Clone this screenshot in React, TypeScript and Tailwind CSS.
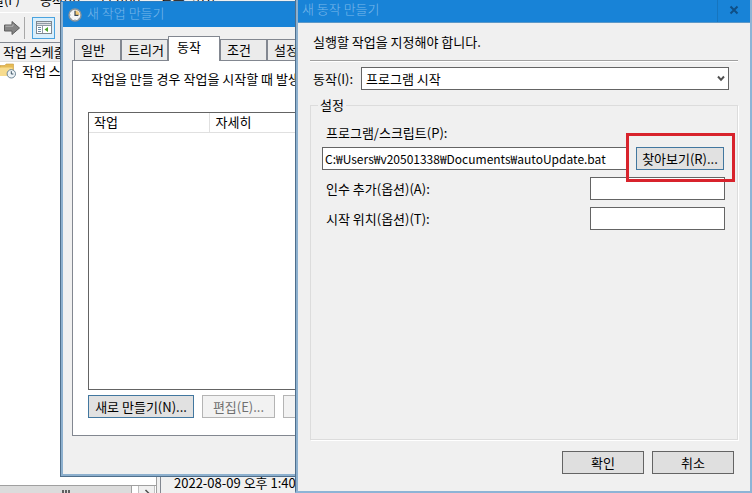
import React, { useState } from 'react';

const menuItems = ['파일(F)', '동작(A)', '보기(V)', '도움말(H)'];

const tabs = ['일반', '트리거', '동작', '조건', '설정'];

const ClockIcon = ({ className }: { className: string }) => (
  <svg viewBox="0 0 14 14" className={className} aria-hidden="true">
    <circle cx="7" cy="7" r="6" fill="#f4f6f7" stroke="#8b949c" strokeWidth="1.4" />
    <path d="M7 7V2.4A4.6 4.6 0 0 1 11.6 7Z" fill="#f0c878" />
    <path d="M7 2.8V7.3H10.4" fill="none" stroke="#3c4a56" strokeWidth="1.2" />
    <path d="M7 11.2v.8M2.2 7h.8M3.6 3.6l.5.5M3.6 10.4l.5-.5M10.4 10.4l-.5-.5" stroke="#8b949c" strokeWidth="0.8" />
  </svg>
);

const ArrowIcon = () => (
  <svg viewBox="0 0 18 16" className="h-4 w-[18px]" aria-hidden="true">
    <path d="M1.5 5H9V1.5L16.5 8L9 14.5V11H1.5Z" fill="#858585" stroke="#5f5f5f" strokeWidth="1" />
    <path d="M2.5 6.2H10V4.2" fill="none" stroke="#b5b5b5" strokeWidth="1" />
  </svg>
);

const PaneIcon = () => (
  <svg viewBox="0 0 16 13" className="h-[13px] w-4" aria-hidden="true">
    <rect x="0.5" y="0.5" width="15" height="12" fill="#fff" stroke="#7e8890" />
    <path d="M1 2.5H15" stroke="#8f9ba5" strokeWidth="1.6" />
    <path d="M11 1.5H14.5" stroke="#e8edf0" strokeWidth="1" strokeDasharray="1 1" />
    <path d="M1 4.5H15M6.5 4.5V12" stroke="#8f9ba5" strokeWidth="1" />
    <path d="M2 6.5H5M2 8.5H5M2 10.5H5" stroke="#6c8ba3" strokeWidth="1" />
    <path d="M12 6V11L8.5 8.5Z" fill="#4aa52c" />
  </svg>
);

const FolderClockIcon = () => (
  <svg viewBox="0 0 16 16" className="h-4 w-4 shrink-0" aria-hidden="true">
    <path d="M0 2.5H5L6 1H13.5V12.5H0Z" fill="#e6bb56" stroke="#c79a3c" strokeWidth="0.6" />
    <path d="M0 4.5H12.5V13H0Z" fill="#f7dc8f" />
    <circle cx="11.3" cy="10.8" r="4.2" fill="#eef4f8" stroke="#6c8494" strokeWidth="1" />
    <path d="M11.3 8.2V11H13.4" fill="none" stroke="#3d5566" strokeWidth="1" />
  </svg>
);

const SchedulerWindow = () => (
  <div className="flex h-full flex-col bg-[#f0f0f0]">
    <nav className="-mt-2 flex h-5 items-start gap-5 whitespace-nowrap leading-4">
      {menuItems.map((item) => (
        <button key={item} type="button" className="first:-ml-5">
          {item}
        </button>
      ))}
    </nav>
    <div className="flex h-[30px] items-center border-t border-white pl-[3px]">
      <button type="button" aria-label="앞으로">
        <ArrowIcon />
      </button>
      <div className="ml-[3px] mr-[7px] h-[22px] w-px bg-[#a8a8a8]" />
      <button
        type="button"
        aria-label="콘솔 트리"
        className="flex h-[22px] w-[23px] items-center justify-center border border-[#4aa3df] bg-[#d9effc]"
      >
        <PaneIcon />
      </button>
    </div>
    <div className="flex min-h-0 flex-1 border-t border-[#828790]">
      <div className="flex w-[157px] shrink-0 flex-col border-r border-[#a0a0a0] bg-white">
        <div className="flex h-[19px] items-center border-b border-[#e0e0e0] bg-[#f0f0f0] pl-[3px] leading-4 whitespace-nowrap">
          작업 스케줄러(로컬)
        </div>
        <div className="flex flex-1 items-start whitespace-nowrap pt-px leading-4">
          <FolderClockIcon />
          <span className="ml-[6px]">작업 스케줄러 라이브러리</span>
        </div>
        <div className="flex h-2 shrink-0 justify-between overflow-hidden border-t border-[#a0a0a0] bg-white pr-px">
          <div className="flex w-[132px] justify-center border-r border-[#a0a0a0] bg-[#dcdcdc] pt-1">
            <svg viewBox="0 0 8 3" className="h-[3px] w-2" aria-hidden="true">
              <path d="M1 0V3M4 0V3M7 0V3" stroke="#606060" strokeWidth="2" />
            </svg>
          </div>
          <div className="flex w-[17px] justify-center border-x border-[#c0c0c0] bg-[#f0f0f0] pt-[3px]">
            <svg viewBox="0 0 6 8" className="h-2 w-[6px]" aria-hidden="true">
              <path d="M1.5 1L4.5 4L1.5 7" fill="none" stroke="#505050" strokeWidth="1.5" />
            </svg>
          </div>
        </div>
      </div>
      <div className="ml-[3px] flex flex-1 items-end border-l border-[#828790] pl-[13px] leading-5">
        2022-08-09 오후 1:40
      </div>
    </div>
  </div>
);

const TaskDialog = () => (
  <section className="absolute bottom-4 left-[60px] right-0 top-px z-10 flex flex-col border border-[#4f6f8c] border-t-[#2f7fc0] bg-[#8db0ce] pb-[2px] pl-[2px]">
    <header className="flex h-[25px] shrink-0 items-center bg-[#1883d7] pl-[5px] text-[#7ab8ea]">
      <ClockIcon className="h-[14px] w-[14px]" />
      <h2 className="ml-[5px] pb-1 font-light leading-4">새 작업 만들기</h2>
    </header>
    <div className="flex min-h-0 flex-1 flex-col bg-[#f0f0f0] pb-[38px] pl-[9px] pt-[9px]">
      <div role="tablist" className="relative z-10 -mb-px flex items-end pl-[2px] leading-4">
        {tabs.map((tab) => (
          <button
            key={tab}
            type="button"
            role="tab"
            aria-selected={tab === '동작'}
            className={
              tab === '동작'
                ? 'h-[25px] w-[52px] border border-b-0 border-[#828790] bg-white pb-1 pl-2 text-left'
                : 'mb-px h-[21px] w-[47px] border border-b-0 border-[#828790] bg-[#ebebeb] pl-[6px] text-left'
            }
          >
            {tab}
          </button>
        ))}
      </div>
      <div className="flex min-h-0 flex-1 flex-col border border-r-0 border-[#828790] bg-white pb-[17px] pl-[15px]">
        <p className="ml-[3px] mt-[10px] leading-4 whitespace-nowrap">
          작업을 만들 경우 작업을 시작할 때 발생할 동작을 지정해야 합니다.
        </p>
        <div className="mb-[5px] mt-[25px] flex-1 border border-[#646464] bg-white">
          <table className="w-full table-fixed text-left">
            <thead>
              <tr className="h-[19px] border-b border-[#e0e0e0] leading-4">
                <th className="w-[120px] border-r border-[#e0e0e0] pl-[5px] font-normal">작업</th>
                <th className="pl-[6px] font-normal">자세히</th>
              </tr>
            </thead>
          </table>
        </div>
        <div className="flex gap-2 leading-4">
          <button type="button" className="h-[23px] w-[106px] border border-[#42779f] bg-[#e1e1e1]">
            새로 만들기(N)...
          </button>
          <button type="button" disabled className="h-[23px] w-[73px] border border-[#b4b4b4] bg-[#f2f2f2] text-[#707070]">
            편집(E)...
          </button>
          <button
            type="button"
            disabled
            aria-label="삭제"
            className="h-[23px] w-[73px] border border-[#b4b4b4] bg-[#f2f2f2]"
          />
        </div>
      </div>
    </div>
  </section>
);

const ActionDialog = () => {
  const [program, setProgram] = useState('C:₩Users₩v20501338₩Documents₩autoUpdate.bat');

  return (
    <section className="absolute inset-y-0 left-[295px] right-0 z-20 flex flex-col border-b-2 border-l border-r-2 border-[#8db4d6] border-l-[#4f6f8c] leading-4">
      <div className="flex min-h-0 flex-1 flex-col border-l-2 border-[#8db0ce] bg-[#f0f0f0]">
        <header className="flex h-[23px] shrink-0 items-center border-b border-[#5c98c8] bg-[#1883d7] pl-1 text-[#7ab8ea]">
          <h2 className="flex-1 pb-1 font-light">새 동작 만들기</h2>
          <button
            type="button"
            aria-label="닫기"
            className="flex h-full w-[33px] items-center justify-center border-l border-[#1675bf] pb-[2px]"
          >
            <svg viewBox="0 0 10 10" className="h-[10px] w-[10px]" aria-hidden="true">
              <path d="M1.5 1.5L8.5 8.5M8.5 1.5L1.5 8.5" stroke="#0f4f86" strokeWidth="2" />
            </svg>
          </button>
        </header>
        <form className="flex min-h-0 flex-1 flex-col px-3 pb-[17px]" onSubmit={(e) => e.preventDefault()}>
          <p className="flex h-[37px] items-center pl-[3px]">실행할 작업을 지정해야 합니다.</p>
          <div className="h-[2px] shrink-0 border-b border-t border-b-white border-t-[#a0a0a0]" />
          <div className="mt-[5px] flex items-center pl-[3px] pr-[9px]">
            <label htmlFor="action" className="w-12 shrink-0">
              동작(I):
            </label>
            <div className="relative flex-1">
              <select id="action" className="block h-[23px] w-full appearance-none border border-[#646464] bg-white pl-1 leading-4">
                <option>프로그램 시작</option>
              </select>
              <svg viewBox="0 0 8 7" className="pointer-events-none absolute right-1 top-2 h-[7px] w-2" aria-hidden="true">
                <path d="M1 1.5L4 4.8L7 1.5" fill="none" stroke="#505050" strokeWidth="2" />
              </svg>
            </div>
          </div>
          <fieldset className="mt-[7px] min-w-0 flex-1 border border-[#dcdcdc] pl-[11px] pr-3 shadow-[1px_1px_0_#fff]">
            <legend className="-ml-1 px-[2px]">설정</legend>
            <label htmlFor="program" className="mb-[6px] mt-3 block pl-1">
              프로그램/스크립트(P):
            </label>
            <div className="flex gap-[10px] pr-px">
              <input
                id="program"
                type="text"
                value={program}
                onChange={(e) => setProgram(e.target.value)}
                className="h-[23px] min-w-0 flex-1 border border-r-0 border-[#646464] bg-white px-[2px] text-xs"
              />
              <div className="relative">
                <button type="button" className="h-[23px] w-[88px] border border-[#42779f] bg-[#e1e1e1]">
                  찾아보기(R)...
                </button>
                <div className="pointer-events-none absolute -bottom-3 -left-[10px] -right-[11px] -top-[14px] border-3 border-[#d8232c]" />
              </div>
            </div>
            <div className="mt-[7px] flex items-center justify-between pl-1">
              <label htmlFor="args">인수 추가(옵션)(A):</label>
              <input id="args" type="text" className="h-[23px] w-[135px] border border-[#646464] bg-white px-[2px]" />
            </div>
            <div className="mt-[7px] flex items-center justify-between pl-1">
              <label htmlFor="start">시작 위치(옵션)(T):</label>
              <input id="start" type="text" className="h-[23px] w-[135px] border border-[#646464] bg-white px-[2px]" />
            </div>
          </fieldset>
          <div className="mt-[11px] flex justify-end gap-2 pr-1">
            <button type="submit" className="h-[23px] w-[82px] border border-[#646464] bg-[#dfdfdf]">
              확인
            </button>
            <button type="button" className="h-[23px] w-[82px] border border-[#646464] bg-[#dfdfdf]">
              취소
            </button>
          </div>
        </form>
      </div>
    </section>
  );
};

const App = () => {
  return (
    <main className="relative h-screen overflow-hidden bg-white font-['Noto_Sans_CJK_KR',sans-serif] text-[13px] text-black">
      <SchedulerWindow />
      <TaskDialog />
      <ActionDialog />
    </main>
  );
};

export default App;
